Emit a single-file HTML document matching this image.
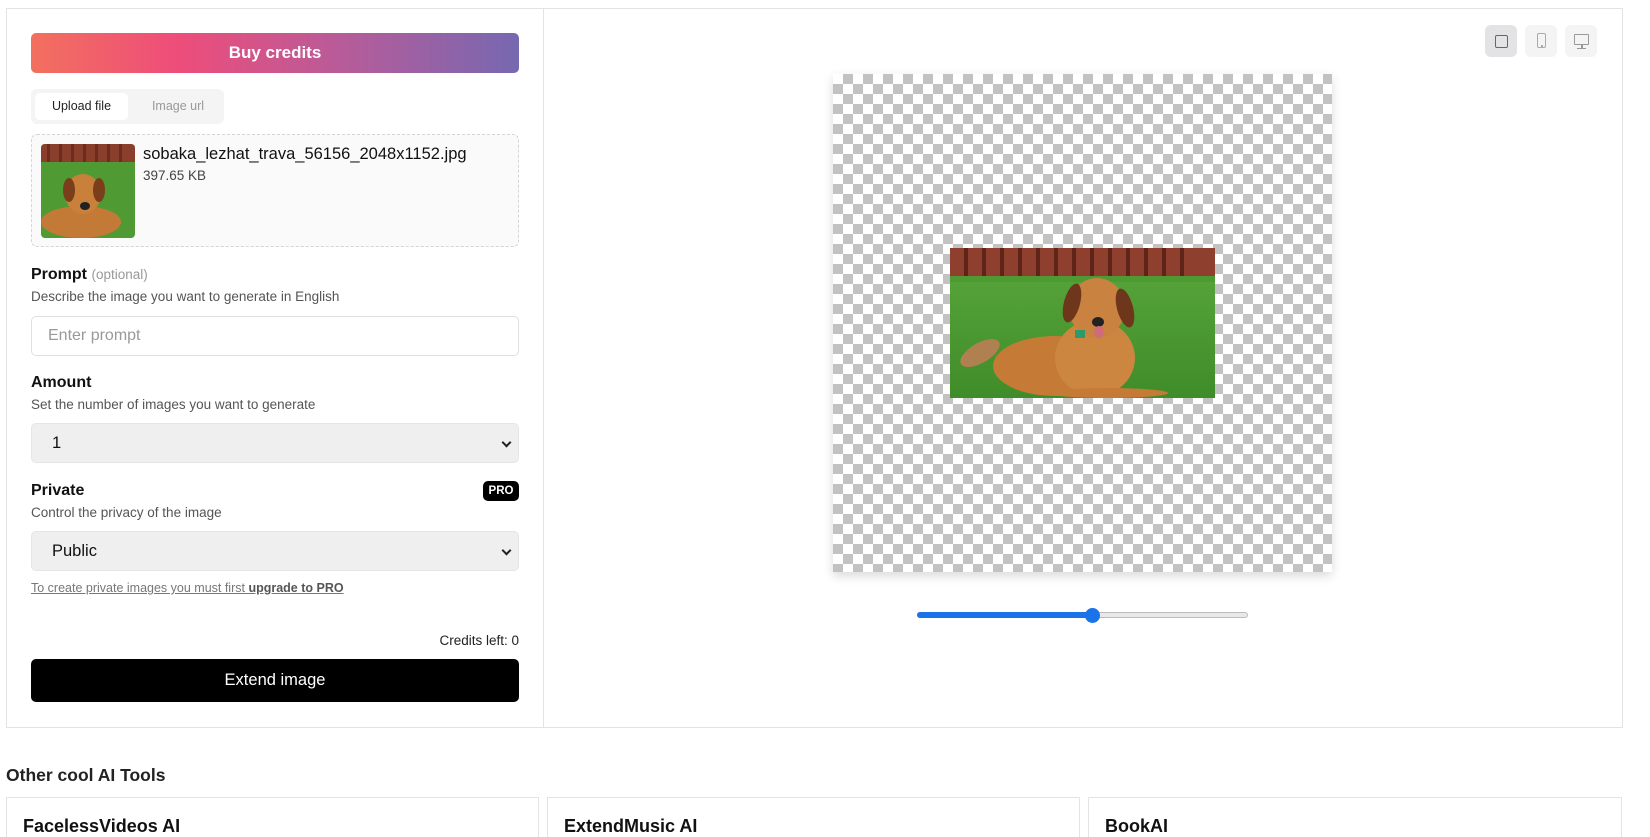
<!DOCTYPE html>
<html><head><meta charset="utf-8"><style>
*{box-sizing:border-box;margin:0;padding:0}
body{width:1650px;height:825px;overflow:hidden;background:#fff;font-family:"Liberation Sans","DejaVu Sans",sans-serif;color:#111;position:relative}
.abs{position:absolute}
.panel{left:6px;top:8px;width:1617px;height:720px;border:1px solid #e3e3e3}
.div{left:543px;top:8px;width:1px;height:720px;background:#e3e3e3}
.buy{left:31px;top:33px;width:488px;height:40px;border-radius:5px;background:linear-gradient(90deg,#f2705e 0%,#ee4d7a 30%,#b55c9a 65%,#7668b1 100%);color:#fff;font-weight:bold;font-size:17px;text-align:center;line-height:40px}
.tabs{left:31px;top:89px;width:193px;height:35px;border-radius:6px;background:#f4f4f4}
.tab1{left:35px;top:93px;width:93px;height:27px;border-radius:5px;background:#fff;font-size:12.5px;line-height:27px;text-align:center;color:#222}
.tab2{left:133px;top:93px;width:90px;height:27px;font-size:12.5px;line-height:27px;text-align:center;color:#999}
.file{left:31px;top:134px;width:488px;height:113px;border:1px dashed #d5d5d5;border-radius:6px;background:#fafafa}
.lbl{font-size:16px;font-weight:bold;color:#111}
.desc{font-size:13.5px;color:#555}
.inp{left:31px;width:488px;height:40px;border:1px solid #e0e0e0;border-radius:5px}
.sel{left:31px;width:488px;height:40px;border-radius:5px;background:#efefef;border:1px solid #e6e6e6;font-size:16.5px;line-height:38px;padding-left:20px}
.chev{position:absolute;right:8px;top:15px;width:7px;height:7px;border-right:2px solid #222;border-bottom:2px solid #222;transform:rotate(45deg)}
.ext{left:31px;top:659px;width:488px;height:43px;background:#000;border-radius:5px;color:#fff;font-size:16.5px;text-align:center;line-height:43px}
.vb{top:25px;width:32px;height:32px;border-radius:6px;background:#f4f4f4}
.canvas{left:833px;top:74px;width:499px;height:498px;background:conic-gradient(#c2c2c2 0 90deg,#fff 90deg 180deg,#c2c2c2 180deg 270deg,#fff 270deg 360deg);background-size:20px 20px;box-shadow:0 4px 10px rgba(0,0,0,.15)}
.card{top:797px;height:40px;border:1px solid #e3e3e3;border-bottom:none}
.ct{font-size:18px;font-weight:bold;position:absolute;left:16px;top:18px}
</style></head><body>
<div class="abs panel"></div><div class="abs div"></div>
<div class="abs buy">Buy credits</div>
<div class="abs tabs"></div>
<div class="abs tab1">Upload file</div>
<div class="abs tab2">Image url</div>
<div class="abs file"></div>
<svg class="abs" style="left:41px;top:144px;border-radius:4px" width="94" height="94" viewBox="0 0 94 94">
<rect width="94" height="94" fill="#4f9a32"/><rect width="94" height="18" fill="#8a3e2c"/>
<g fill="#6d2c1f"><rect x="6" y="0" width="3" height="18"/><rect x="18" y="0" width="3" height="18"/><rect x="30" y="0" width="3" height="18"/><rect x="42" y="0" width="3" height="18"/><rect x="54" y="0" width="3" height="18"/><rect x="66" y="0" width="3" height="18"/><rect x="78" y="0" width="3" height="18"/></g>
<ellipse cx="40" cy="78" rx="40" ry="16" fill="#c27a36"/><ellipse cx="42" cy="50" rx="18" ry="20" fill="#c8803b"/><ellipse cx="28" cy="46" rx="6" ry="12" fill="#7a3f1a"/><ellipse cx="58" cy="46" rx="6" ry="12" fill="#7a3f1a"/><ellipse cx="44" cy="62" rx="5" ry="4" fill="#222"/>
</svg>
<div class="abs" style="left:143px;top:145px;font-size:16.5px;color:#111">sobaka_lezhat_trava_56156_2048x1152.jpg</div>
<div class="abs" style="left:143px;top:168px;font-size:13.5px;color:#444">397.65 KB</div>

<div class="abs lbl" style="left:31px;top:266px">Prompt <span style="font-weight:normal;font-size:13.5px;color:#999">(optional)</span></div>
<div class="abs desc" style="left:31px;top:289px">Describe the image you want to generate in English</div>
<div class="abs inp" style="top:316px"><span style="position:absolute;left:16px;top:10px;font-size:16px;color:#999">Enter prompt</span></div>

<div class="abs lbl" style="left:31px;top:374px">Amount</div>
<div class="abs desc" style="left:31px;top:397px">Set the number of images you want to generate</div>
<div class="abs sel" style="top:423px">1<span class="chev"></span></div>

<div class="abs lbl" style="left:31px;top:482px">Private</div>
<div class="abs" style="left:483px;top:481px;width:36px;height:20px;background:#000;border-radius:5px;color:#fff;font-size:11.5px;font-weight:bold;text-align:center;line-height:20px">PRO</div>
<div class="abs desc" style="left:31px;top:505px">Control the privacy of the image</div>
<div class="abs sel" style="top:531px">Public<span class="chev"></span></div>
<div class="abs" style="left:31px;top:581px;font-size:12.5px;color:#777;text-decoration:underline">To create private images you must first <b style="color:#555">upgrade to PRO</b></div>
<div class="abs" style="left:380px;top:633px;width:139px;text-align:right;font-size:13.5px;color:#222">Credits left: 0</div>
<div class="abs ext">Extend image</div>

<div class="abs vb" style="left:1485px;background:#e3e3e6"><div style="position:absolute;left:10px;top:10px;width:13px;height:13px;border:1.6px solid #666;border-radius:2px"></div></div>
<div class="abs vb" style="left:1525px"><div style="position:absolute;left:12px;top:8px;width:9px;height:15px;border:1.3px solid #aaa;border-radius:2px"></div><div style="position:absolute;left:16px;top:20px;width:1.5px;height:1.5px;background:#aaa"></div></div>
<div class="abs vb" style="left:1565px"><div style="position:absolute;left:9px;top:9px;width:15px;height:11px;border:1.3px solid #999;border-radius:1px"></div><div style="position:absolute;left:16px;top:20px;width:1.5px;height:3px;background:#999"></div><div style="position:absolute;left:12px;top:23px;width:9px;height:1.3px;background:#999"></div></div>

<div class="abs canvas"></div>
<svg class="abs" style="left:950px;top:248px" width="265" height="150" viewBox="0 0 265 150">
<defs><linearGradient id="g" x1="0" y1="0" x2="0" y2="1"><stop offset="0" stop-color="#5aa83c"/><stop offset="1" stop-color="#3f8c2a"/></linearGradient></defs>
<rect width="265" height="150" fill="url(#g)"/>
<rect width="265" height="30" fill="#8e3f2d"/>
<g fill="#5e2418"><rect x="14" y="0" width="4" height="30"/><rect x="32" y="0" width="4" height="30"/><rect x="50" y="0" width="4" height="30"/><rect x="68" y="0" width="4" height="30"/><rect x="86" y="0" width="4" height="30"/><rect x="104" y="0" width="4" height="30"/><rect x="122" y="0" width="4" height="30"/><rect x="140" y="0" width="4" height="30"/><rect x="158" y="0" width="4" height="30"/><rect x="176" y="0" width="4" height="30"/><rect x="194" y="0" width="4" height="30"/><rect x="212" y="0" width="4" height="30"/><rect x="230" y="0" width="4" height="30"/></g>
<rect y="28" width="265" height="6" fill="#4d9a32"/>
<ellipse cx="30" cy="105" rx="22" ry="10" fill="#b08050" transform="rotate(-30 30 105)"/>
<ellipse cx="105" cy="118" rx="62" ry="30" fill="#c57a35"/>
<ellipse cx="145" cy="110" rx="40" ry="38" fill="#cc8640"/>
<ellipse cx="147" cy="60" rx="28" ry="30" fill="#c98240"/>
<ellipse cx="122" cy="55" rx="8" ry="20" fill="#6e361a" transform="rotate(15 122 55)"/>
<ellipse cx="175" cy="60" rx="8" ry="20" fill="#6e361a" transform="rotate(-15 175 60)"/>
<ellipse cx="158" cy="145" rx="60" ry="5" fill="#c57a35"/>
<ellipse cx="148" cy="74" rx="6" ry="5" fill="#222"/>
<ellipse cx="149" cy="84" rx="5" ry="6" fill="#d06b7a"/>
<rect x="125" y="82" width="10" height="8" fill="#2d9a6a"/>
</svg>

<div class="abs" style="left:917px;top:612px;width:331px;height:6px;border-radius:3px;background:#e8e8e8;border:1px solid #bbb"></div>
<div class="abs" style="left:917px;top:612px;width:175px;height:6px;border-radius:3px;background:#1a73e8"></div>
<div class="abs" style="left:1085px;top:608px;width:15px;height:15px;border-radius:50%;background:#1a73e8"></div>

<div class="abs" style="left:6px;top:765px;font-size:17.5px;font-weight:bold;color:#222">Other cool AI Tools</div>
<div class="abs card" style="left:6px;width:533px"><span class="ct">FacelessVideos AI</span></div>
<div class="abs card" style="left:547px;width:533px"><span class="ct">ExtendMusic AI</span></div>
<div class="abs card" style="left:1088px;width:534px"><span class="ct">BookAI</span></div>
</body></html>
